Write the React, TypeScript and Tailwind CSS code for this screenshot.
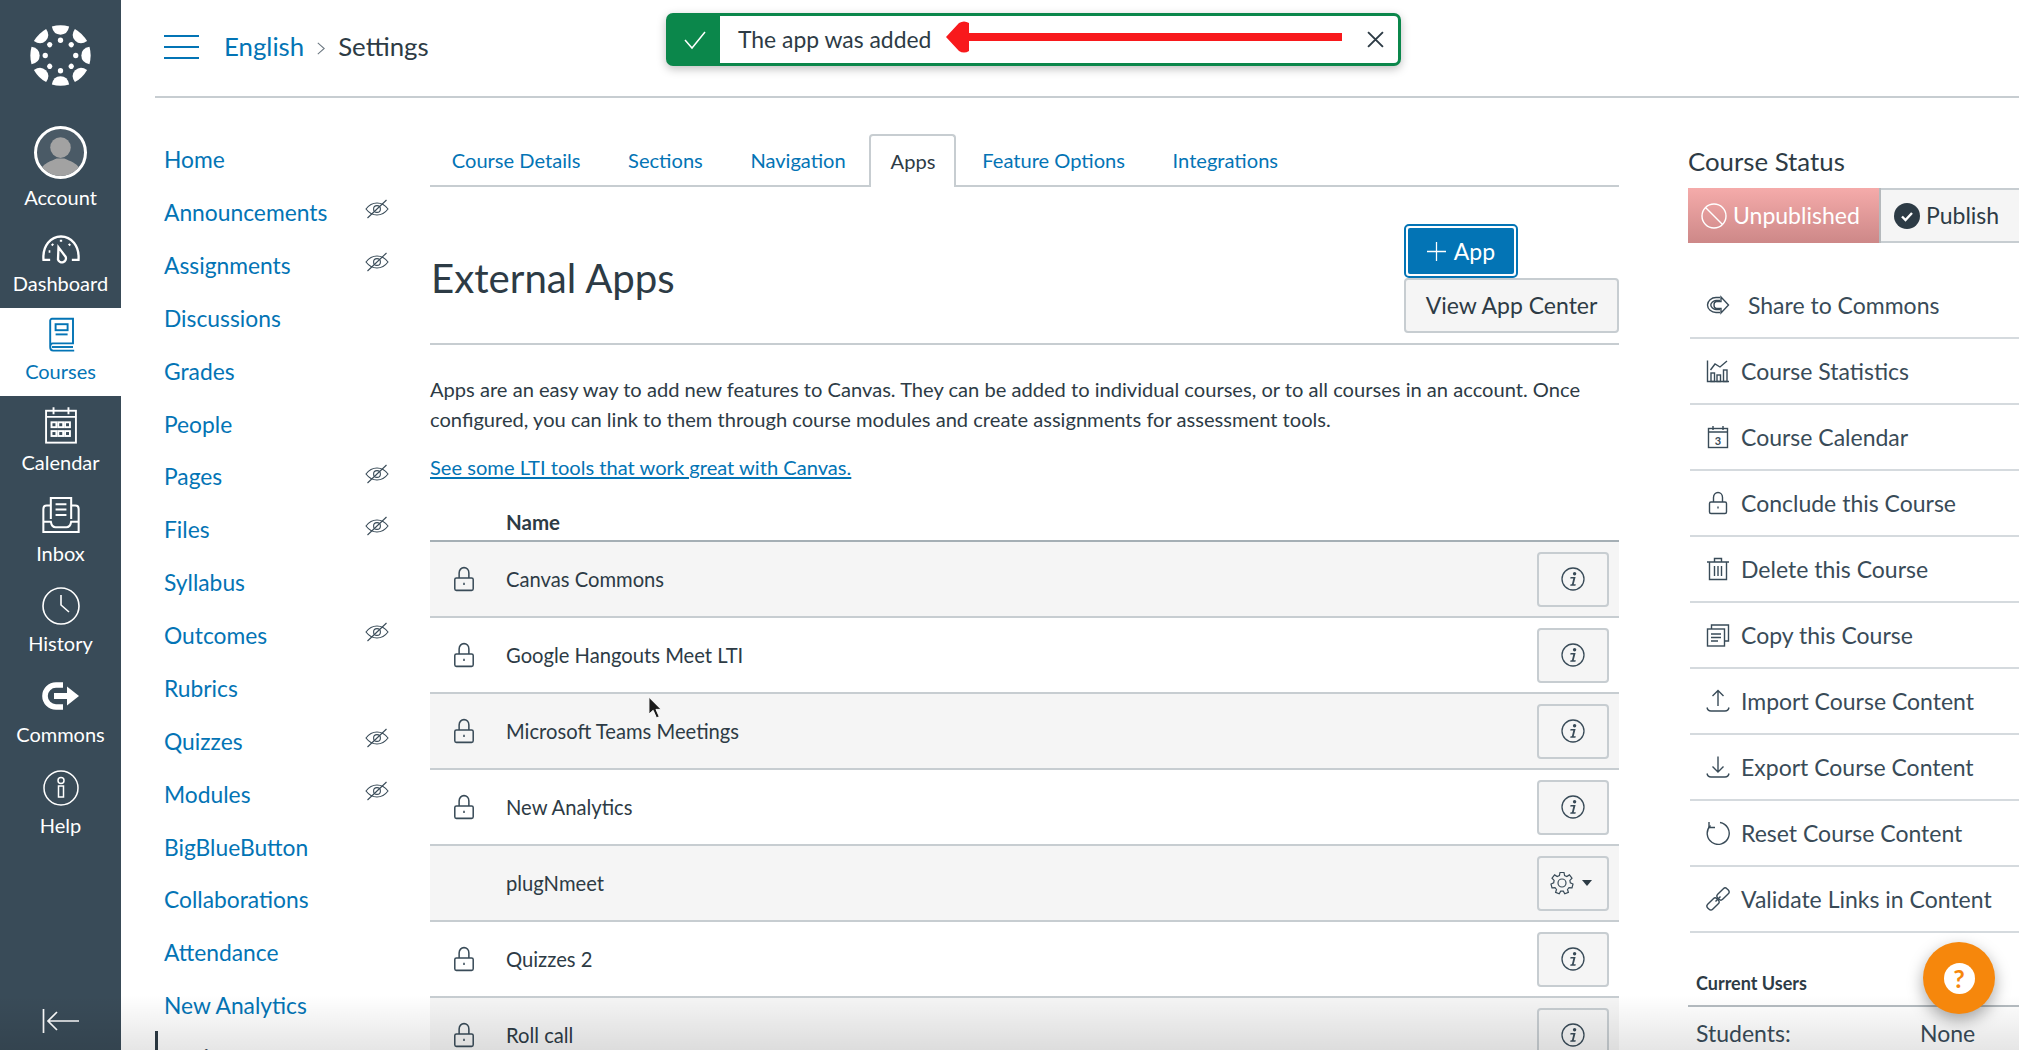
import React from 'react';

const courseNav = [
  { label: 'Home' },
  { label: 'Announcements', hidden: true },
  { label: 'Assignments', hidden: true },
  { label: 'Discussions' },
  { label: 'Grades' },
  { label: 'People' },
  { label: 'Pages', hidden: true },
  { label: 'Files', hidden: true },
  { label: 'Syllabus' },
  { label: 'Outcomes', hidden: true },
  { label: 'Rubrics' },
  { label: 'Quizzes', hidden: true },
  { label: 'Modules', hidden: true },
  { label: 'BigBlueButton' },
  { label: 'Collaborations' },
  { label: 'Attendance' },
  { label: 'New Analytics' },
];

const tabs = ['Course Details', 'Sections', 'Navigation', 'Apps', 'Feature Options', 'Integrations'];

const apps = [
  { name: 'Canvas Commons', locked: true },
  { name: 'Google Hangouts Meet LTI', locked: true },
  { name: 'Microsoft Teams Meetings', locked: true },
  { name: 'New Analytics', locked: true },
  { name: 'plugNmeet', locked: false },
  { name: 'Quizzes 2', locked: true },
  { name: 'Roll call', locked: true },
];

type IconProps = { className?: string };

const Line = ({ className, children }: IconProps & { children: React.ReactNode }) => (
  <svg viewBox="0 0 24 24" fill="none" stroke="currentColor" strokeWidth="1.4" className={className}>
    {children}
  </svg>
);

const CanvasLogo = () => (
  <svg viewBox="0 0 60 60" className="w-[61px] h-[61px] text-white" fill="currentColor">
    {[0, 45, 90, 135, 180, 225, 270, 315].map((deg) => (
      <g key={deg} transform={`rotate(${deg} 30 30)`}>
        <path d="M21.5 1.5Q30 -0.8 38.5 1.5Q37 9.5 30 9.5Q23 9.5 21.5 1.5Z" />
        <circle cx="30" cy="15" r="2.6" />
      </g>
    ))}
  </svg>
);

const AvatarIcon = () => (
  <div className="w-[53px] h-[53px] rounded-full border-[3px] border-white bg-[#4a5a66] overflow-hidden">
    <svg viewBox="0 0 48 48" className="w-full h-full">
      <circle cx="24" cy="19" r="10.5" fill="#a2a2a2" />
      <path d="M2 48C3 35 14 33 20 30H28C34 33 45 35 46 48Z" fill="#a2a2a2" />
    </svg>
  </div>
);

const DashboardIcon = ({ className }: IconProps) => (
  <Line className={className}>
    <path d="M5.5 18.5H1.5C0.8 10 6 4.5 12 4.5S23.2 10 22.5 18.5H18.5" />
    <path d="M10.5 11L14.8 16.7A2.4 2.4 0 0 1 10.2 18.4Z" />
    <path d="M12 6.5V7.6M6.5 9L7.3 9.8M17.5 9L16.7 9.8M4.6 13.5H5.6" />
  </Line>
);

const CoursesIcon = ({ className }: IconProps) => (
  <svg viewBox="0 0 24 30" fill="none" stroke="currentColor" strokeWidth="1.6" className={className}>
    <path d="M3 25V3A1.5 1.5 0 0 1 4.5 1.5H22V22H5C3.5 22 3 23.5 3 25C3 27 4 28 5.5 28H23" />
    <path d="M4.5 25H22" />
    <rect x="7.5" y="6" width="10" height="5" />
    <path d="M7.5 14.5H17.5" />
  </svg>
);

const CalendarIcon = ({ className }: IconProps) => (
  <svg viewBox="0 0 24 28" fill="none" stroke="currentColor" strokeWidth="1.4" className={className}>
    <rect x="1" y="3.5" width="22" height="23.5" />
    <path d="M6.5 1V6M17.5 1V6M1 8H23" />
    {[5, 10, 15].map((x) => (
      <React.Fragment key={x}>
        <rect x={x} y="12" width="3.6" height="3.6" />
        <rect x={x} y="18.5" width="3.6" height="3.6" />
      </React.Fragment>
    ))}
  </svg>
);

const InboxIcon = ({ className }: IconProps) => (
  <svg viewBox="0 0 28 28" fill="none" stroke="currentColor" strokeWidth="1.5" className={className}>
    <path d="M6.5 17V1.5H21.5V17" />
    <path d="M10 6H18M10 10H18M10 14H18" />
    <path d="M6.5 7H3.5C2 7 1 8 1 9.5V26.5H27V9.5C27 8 26 7 24.5 7H21.5" />
    <path d="M1 19H6.5C7 22 8 23 10 23H18C20 23 21 22 21.5 19H27" />
  </svg>
);

const HistoryIcon = ({ className }: IconProps) => (
  <svg viewBox="0 0 38 38" fill="none" stroke="currentColor" strokeWidth="1.6" className={className}>
    <circle cx="19" cy="19" r="18" />
    <path d="M19 8V18L27 25" />
  </svg>
);

const CommonsIcon = ({ className }: IconProps) => (
  <svg viewBox="0 0 37 28" fill="white" className={className}>
    <path d="M21 3H14A11 11 0 0 0 14 25H21" fill="none" stroke="white" strokeWidth="5.6" />
    <rect x="12" y="11" width="14" height="6" />
    <path d="M25 4.5L37 14L25 23.5Z" />
  </svg>
);

const HelpIcon = ({ className }: IconProps) => (
  <svg viewBox="0 0 36 36" fill="none" stroke="currentColor" strokeWidth="1.5" className={className}>
    <circle cx="18" cy="18" r="17" />
    <circle cx="18" cy="10.5" r="3" />
    <rect x="15.5" y="16" width="5" height="11" />
  </svg>
);

const CollapseIcon = () => (
  <svg viewBox="0 0 38 26" fill="none" stroke="white" strokeWidth="1.7" className="w-[38px] h-[26px]">
    <path d="M1.5 1V25M37 13H6M15 4L6 13L15 22" />
  </svg>
);

const EyeOffIcon = () => (
  <svg viewBox="0 0 24 20" fill="none" stroke="#394b58" strokeWidth="1.1" className="w-[24px] h-[20px]">
    <path d="M1 10C4 6 8 4 12 4S20 6 23 10C20 14 16 16 12 16S4 14 1 10Z" />
    <circle cx="12" cy="10" r="3.4" />
    <path d="M2.5 19L21.5 1" />
  </svg>
);

const LockIcon = ({ className }: IconProps) => (
  <Line className={className}>
    <path d="M7.5 11V6.5C7.5 3.5 9.5 1.5 12 1.5S16.5 3.5 16.5 6.5V11" />
    <rect x="3.5" y="11" width="17" height="11.5" rx="1.5" />
    <path d="M12 15.5V17.5" />
  </Line>
);

const InfoIcon = () => (
  <svg viewBox="0 0 24 24" fill="none" className="w-[24px] h-[24px] text-[#394b58]">
    <circle cx="12" cy="12" r="11" stroke="currentColor" strokeWidth="1.3" />
    <circle cx="13.6" cy="6.7" r="1.7" fill="currentColor" />
    <path d="M9.6 10H14.6L12.7 17.2H14.8L14.4 18.8H9.2L9.6 17.2H10.9L12.3 11.5H9.2Z" fill="currentColor" />
  </svg>
);

const GearIcon = () => (
  <svg viewBox="0 0 24 24" fill="none" stroke="#394b58" strokeWidth="1.2" className="w-[24px] h-[24px]">
    <path d="M10 1.5H14L14.6 4.6L16.8 5.6L19.4 3.9L22 7.2L19.9 9.4L20.3 11.8L23 13L22 16.8L19 16.6L17.5 18.5L18.4 21.4L14.8 22.8L13.3 20.2H10.7L9.2 22.8L5.6 21.4L6.5 18.5L5 16.6L2 16.8L1 13L3.7 11.8L4.1 9.4L2 7.2L4.6 3.9L7.2 5.6L9.4 4.6Z" />
    <circle cx="12" cy="12" r="4" />
  </svg>
);

const ShareIcon = ({ className }: IconProps) => (
  <Line className={className}>
    <path d="M14 4.5H10C5.5 4.5 1.5 8 1.5 12S5.5 19.5 10 19.5H14" />
    <path d="M14 7.5H10C7.5 7.5 4.8 10 4.8 12S7.5 16.5 10 16.5H14" />
    <path d="M15 4L22.5 12L15 20V15.5H10.5C8.8 15.5 8 14 8 12S8.8 8.5 10.5 8.5H15Z" />
  </Line>
);

const StatsIcon = ({ className }: IconProps) => (
  <Line className={className}>
    <path d="M1.5 1.5V22.5H23" />
    <path d="M4.5 11L9 5L14 8L21 2" />
    <rect x="5" y="14" width="3.5" height="8.5" />
    <rect x="11" y="16" width="3.5" height="6.5" />
    <rect x="17.5" y="11" width="3.5" height="11.5" />
  </Line>
);

const DayIcon = ({ className }: IconProps) => (
  <Line className={className}>
    <rect x="2.5" y="3.5" width="19" height="19" />
    <path d="M7 1V5M17 1V5M2.5 7H21.5" />
    <text x="12" y="19.5" textAnchor="middle" fontSize="11" fontWeight="700" fill="currentColor" stroke="none">3</text>
  </Line>
);

const TrashIcon = ({ className }: IconProps) => (
  <Line className={className}>
    <path d="M1 5H23M8.5 5V1.5H15.5V5M3.5 5V22.5H20.5V5M8.5 9V19M12 9V19M15.5 9V19" />
  </Line>
);

const CopyIcon = ({ className }: IconProps) => (
  <Line className={className}>
    <rect x="1.5" y="6" width="17" height="17" />
    <path d="M5.5 6V2H22.5V18H18.5" />
    <path d="M5 11H15M5 14.5H15M5 18H12" />
  </Line>
);

const UploadIcon = ({ className }: IconProps) => (
  <Line className={className}>
    <path d="M12 17V1.5M6.5 7L12 1.5L17.5 7" />
    <path d="M1 18.5C1.5 21 3 22 5 22H19C21 22 22.5 21 23 18.5" />
  </Line>
);

const DownloadIcon = ({ className }: IconProps) => (
  <Line className={className}>
    <path d="M12 1.5V17M6.5 11.5L12 17L17.5 11.5" />
    <path d="M1 18.5C1.5 21 3 22 5 22H19C21 22 22.5 21 23 18.5" />
  </Line>
);

const ResetIcon = ({ className }: IconProps) => (
  <Line className={className}>
    <path d="M14 1.5A11 11 0 1 1 4.5 4.5" />
    <path d="M3 1V6.5H9" />
  </Line>
);

const LinkIcon = ({ className }: IconProps) => (
  <Line className={className}>
    <rect x="0.5" y="13.5" width="13" height="7" rx="2.5" transform="rotate(-45 7 17)" />
    <rect x="10.5" y="3.5" width="13" height="7" rx="2.5" transform="rotate(-45 17 7)" />
    <path d="M9.5 14.5L14.5 9.5" />
  </Line>
);

const sideNav = [
  { label: 'Dashboard', Icon: DashboardIcon, size: 'w-[40px] h-[40px] mt-[4px]', h: 'h-[88px]', iconH: 'h-[50px]' },
  { label: 'Courses', Icon: CoursesIcon, size: 'w-[30px] h-[36px]', h: 'h-[88px]', iconH: 'h-[50px]', active: true },
  { label: 'Calendar', Icon: CalendarIcon, size: 'w-[34px] h-[38px]', h: 'h-[90px]', iconH: 'h-[53px]' },
  { label: 'Inbox', Icon: InboxIcon, size: 'w-[38px] h-[38px]', h: 'h-[91px]', iconH: 'h-[54px]' },
  { label: 'History', Icon: HistoryIcon, size: 'w-[38px] h-[38px]', h: 'h-[90px]', iconH: 'h-[53px]' },
  { label: 'Commons', Icon: CommonsIcon, size: 'w-[37px] h-[28px]', h: 'h-[90px]', iconH: 'h-[54px]' },
  { label: 'Help', Icon: HelpIcon, size: 'w-[36px] h-[36px] mt-[2px]', h: 'h-[91px]', iconH: 'h-[55px]' },
];

const courseActions = [
  { label: 'Share to Commons', Icon: ShareIcon, gap: 'gap-[18px]' },
  { label: 'Course Statistics', Icon: StatsIcon },
  { label: 'Course Calendar', Icon: DayIcon },
  { label: 'Conclude this Course', Icon: LockIcon },
  { label: 'Delete this Course', Icon: TrashIcon },
  { label: 'Copy this Course', Icon: CopyIcon },
  { label: 'Import Course Content', Icon: UploadIcon },
  { label: 'Export Course Content', Icon: DownloadIcon },
  { label: 'Reset Course Content', Icon: ResetIcon },
  { label: 'Validate Links in Content', Icon: LinkIcon },
];

const Sidebar = () => (
  <aside className="w-[121px] shrink-0 h-full bg-[#394b58] flex flex-col text-white text-[20px]">
    <div className="h-[111px] flex items-start justify-center pt-[25px]">
      <CanvasLogo />
    </div>
    <div className="h-[109px] flex flex-col items-center pt-[15px]">
      <AvatarIcon />
      <span className="mt-[5px] leading-[26px]">Account</span>
    </div>
    {sideNav.map(({ label, Icon, size, h, iconH, active }) => (
      <div key={label} className={`${h} flex flex-col items-center ${active ? 'bg-white text-[#0374b5]' : ''}`}>
        <div className={`${iconH} flex items-center justify-center pt-[4px]`}>
          <Icon className={size} />
        </div>
        <span className="leading-[26px]">{label}</span>
      </div>
    ))}
    <div className="mt-auto flex justify-center pb-[16px]">
      <CollapseIcon />
    </div>
  </aside>
);

const Header = () => (
  <header className="h-[98px] shrink-0 ml-[34px] border-b-2 border-[#c7cdd1] flex items-center pl-[9px] pb-[3px] text-[25.8px]">
    <div className="w-[35px] flex flex-col gap-[9px]">
      <span className="h-[2px] bg-[#0374b5]" />
      <span className="h-[2px] bg-[#0374b5]" />
      <span className="h-[2px] bg-[#0374b5]" />
    </div>
    <a className="ml-[25px] text-[#0374b5]">English</a>
    <svg viewBox="0 0 10 16" fill="none" stroke="#6b7780" strokeWidth="1.3" className="w-[8px] h-[13px] mx-[13px] mt-[3px]">
      <path d="M1 1L9 8L1 15" />
    </svg>
    <span className="text-[#2d3b45]">Settings</span>
  </header>
);

const CourseNav = () => (
  <nav className="w-[275px] shrink-0 ml-[34px] pt-[35px] text-[22.8px] text-[#0374b5]">
    {courseNav.map(({ label, hidden }) => (
      <div key={label} className="h-[52.86px] flex items-center justify-between pl-[9px] pr-[41px]">
        <a>{label}</a>
        {hidden && <span className="-mt-[6px]"><EyeOffIcon /></span>}
      </div>
    ))}
    <div className="h-[31px] -mt-[1px] border-l-[3px] border-[#2d3b45] pl-[10px] pt-[10px] leading-[32px] text-[#2d3b45] font-bold text-[20px]">
      Settings
    </div>
  </nav>
);

const Tabs = () => (
  <div className="h-[53px] border-b-2 border-[#c7cdd1] text-[20.1px]">
    <div className="flex -ml-[2px]">
      {tabs.map((tab) =>
        tab === 'Apps' ? (
          <div key={tab} className="h-[53px] w-[87px] mr-[2px] flex items-center justify-center bg-white border-2 border-b-0 border-[#c7cdd1] rounded-t-[4px] text-[#2d3b45]">
            {tab}
          </div>
        ) : (
          <a key={tab} className="h-[51px] pt-[2px] px-[23.8px] flex items-center text-[#0374b5]">{tab}</a>
        ),
      )}
    </div>
  </div>
);

const AppRow = ({ name, locked, shaded }: { name: string; locked: boolean; shaded: boolean }) => (
  <div className={`h-[76px] shrink-0 flex items-center border-b-2 border-[#c7cdd1] pr-[10px] text-[20.2px] text-[#2d3b45] ${shaded ? 'bg-[#f5f5f5]' : 'bg-white'}`}>
    <div className="w-[76px] pl-[21px] shrink-0">
      {locked && <LockIcon className="w-[26px] h-[26px] text-[#394b58]" />}
    </div>
    <span className="flex-1">{name}</span>
    <button className={`w-[72px] h-[55px] flex items-center justify-center bg-[#f5f5f5] border-2 border-[#c7cdd1] rounded-[4px] ${locked ? '' : 'gap-[8px] pr-[4px]'}`}>
      {locked ? (
        <InfoIcon />
      ) : (
        <>
          <GearIcon />
          <span className="w-0 h-0 border-x-[5px] border-x-transparent border-t-[6px] border-t-[#2d3b45]" />
        </>
      )}
    </button>
  </div>
);

const Content = () => (
  <section className="w-[1189px] shrink-0 pt-[36px]">
    <Tabs />
    <div className="h-[158px] pt-[37px] flex justify-between border-b-2 border-[#c7cdd1]">
      <h1 className="text-[40.2px] leading-[48px] text-[#2d3b45] pt-[30px] pl-[1px]">External Apps</h1>
      <div className="flex flex-col items-start">
        <button className="w-[114px] h-[54px] rounded-[5px] border-2 border-[#0374b5] p-[2px]">
          <span className="w-full h-full bg-[#0374b5] rounded-[2px] flex items-center justify-center gap-[8px] text-white text-[23px]">
            <svg viewBox="0 0 18 18" stroke="white" strokeWidth="1.2" className="w-[19px] h-[19px]">
              <path d="M9 0V18M0 9H18" />
            </svg>
            App
          </span>
        </button>
        <button className="w-[215px] h-[55px] bg-[#f5f5f5] border-2 border-[#c7cdd1] rounded-[4px] text-[23px] text-[#2d3b45]">
          View App Center
        </button>
      </div>
    </div>
    <p className="mt-[29px] text-[20.12px] leading-[30px] text-[#2d3b45]">
      Apps are an easy way to add new features to Canvas. They can be added to individual courses, or to all courses in an account. Once
      <br />
      configured, you can link to them through course modules and create assignments for assessment tools.
    </p>
    <a className="block mt-[18px] text-[20.12px] leading-[30px] text-[#0374b5] underline">See some LTI tools that work great with Canvas.</a>
    <div className="mt-[19px] h-[41px] pl-[76px] pt-[7px] border-b-2 border-[#a5afb5] font-bold text-[20.5px] leading-[28px] text-[#2d3b45]">Name</div>
    {apps.map((app, i) => (
      <AppRow key={app.name} name={app.name} locked={app.locked} shaded={i % 2 === 0} />
    ))}
  </section>
);

const RightPanel = () => (
  <aside className="ml-[69px] flex-1 pt-[36px] text-[#2d3b45] min-w-0">
    <h2 className="text-[25.8px] leading-[36px] h-[54px] pt-[9px]">Course Status</h2>
    <div className="h-[55px] flex text-[23px]">
      <div className="w-[193px] flex items-center gap-[6px] pl-[13px] bg-gradient-to-b from-[#f5abaa] to-[#cd8888] text-white border-r-2 border-[#b5b9bc]">
        <svg viewBox="0 0 26 26" fill="none" stroke="white" strokeWidth="1.4" className="w-[26px] h-[26px]">
          <circle cx="13" cy="13" r="12" />
          <path d="M4.5 4.5L21.5 21.5" />
        </svg>
        Unpublished
      </div>
      <div className="flex-1 flex items-center gap-[6px] pl-[13px] bg-[#f5f5f5] border-y-2 border-[#c7cdd1]">
        <svg viewBox="0 0 26 26" className="w-[26px] h-[26px]">
          <circle cx="13" cy="13" r="13" fill="#2d3b45" />
          <path d="M8 13.5L11.5 17L18 10" fill="none" stroke="white" strokeWidth="2.4" />
        </svg>
        Publish
      </div>
    </div>
    <ul className="mt-[30px] ml-[2px]">
      {courseActions.map(({ label, Icon, gap }) => (
        <li key={label} className={`h-[66px] flex items-center ${gap ?? 'gap-[11px]'} pl-[16px] border-b-2 border-[#d5dade] text-[23px] text-[#394b58]`}>
          <Icon className="w-[24px] h-[24px] shrink-0" />
          {label}
        </li>
      ))}
    </ul>
    <div className="h-[74px] flex items-end pl-[8px] pb-[8px] border-b-2 border-[#b5bcc1] font-bold text-[18px]">Current Users</div>
    <div className="flex pl-[8px] pt-[9px] text-[23px] text-[#394b58]">
      <span className="w-[224px]">Students:</span>
      <span>None</span>
    </div>
  </aside>
);

const Toast = () => (
  <div className="absolute left-[666px] top-[13px] w-[735px] h-[53px] flex items-center bg-white border-[3px] border-[#0b874b] rounded-[7px] shadow-[0_3px_10px_rgba(0,0,0,0.25)] text-[22.9px] text-[#2d3b45]">
    <div className="w-[51px] h-full bg-[#0b874b] flex items-center justify-center">
      <svg viewBox="0 0 24 24" fill="none" stroke="white" strokeWidth="1.5" className="w-[24px] h-[24px]">
        <path d="M2 12L9 20L22 4" />
      </svg>
    </div>
    <span className="ml-[18px]">The app was added</span>
    <svg viewBox="0 0 16 16" fill="none" stroke="#2d3b45" strokeWidth="1.8" className="absolute left-[698px] top-[15px] w-[17px] h-[17px]">
      <path d="M1 1L15 15M15 1L1 15" />
    </svg>
  </div>
);

const RedArrow = () => (
  <svg viewBox="0 0 396 32" className="absolute left-[946px] top-[21px] w-[396px] h-[32px]">
    <path d="M0 16L13 2Q18 -1 23 2V12H396V20H23V30Q18 33 13 30Z" fill="#f8191c" />
  </svg>
);

const MouseCursor = () => (
  <svg viewBox="0 0 16 24" className="absolute left-[648px] top-[696px] w-[15px] h-[23px]">
    <path d="M1 1V19L5.5 15L9 23L12 21.8L8.5 14H14Z" fill="#1b1b1b" stroke="#fff" strokeWidth="1" />
  </svg>
);

const HelpBubble = () => (
  <div className="absolute left-[1923px] top-[942px] w-[72px] h-[72px] rounded-full bg-[#f6870c] flex items-center justify-center shadow-[0_6px_16px_rgba(0,0,0,0.35)]">
    <div className="w-[31px] h-[31px] rounded-full bg-white flex items-center justify-center text-[#f6870c] font-bold text-[25px] leading-none">?</div>
  </div>
);

export default function App() {
  return (
    <div className="relative w-[2019px] h-[1050px] overflow-hidden bg-white flex font-[Lato,sans-serif]">
      <Sidebar />
      <main className="flex-1 min-w-0 flex flex-col">
        <Header />
        <div className="flex flex-1 min-h-0">
          <CourseNav />
          <Content />
          <RightPanel />
        </div>
      </main>
      <Toast />
      <RedArrow />
      <MouseCursor />
      <div className="absolute inset-x-0 bottom-0 h-[55px] bg-gradient-to-b from-transparent to-black/10" />
      <HelpBubble />
    </div>
  );
}
